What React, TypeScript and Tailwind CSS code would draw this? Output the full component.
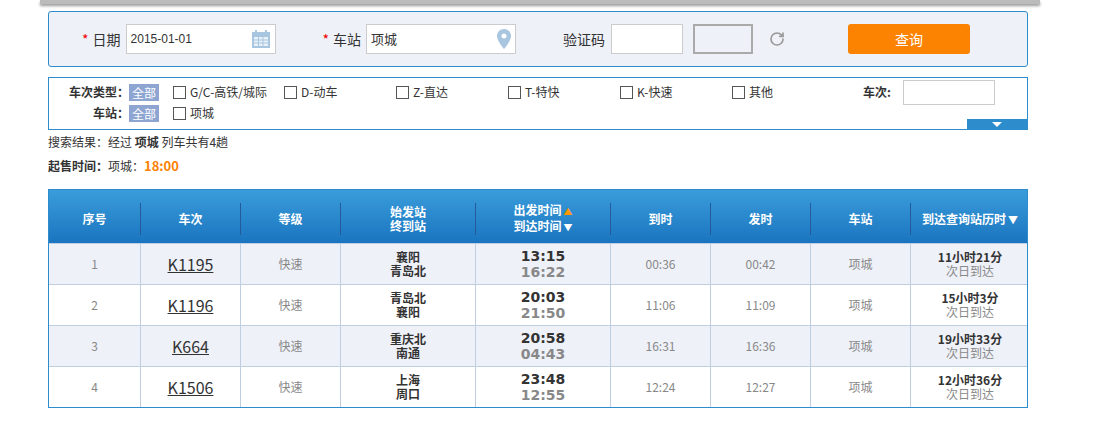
import { RotateCw } from 'lucide-react';

const rows = [
  { no: 1, code: 'K1195', from: '襄阳', to: '青岛北', dep: '13:15', arr: '16:22', a: '00:36', d: '00:42', dur: '11小时21分' },
  { no: 2, code: 'K1196', from: '青岛北', to: '襄阳', dep: '20:03', arr: '21:50', a: '11:06', d: '11:09', dur: '15小时3分' },
  { no: 3, code: 'K664', from: '重庆北', to: '南通', dep: '20:58', arr: '04:43', a: '16:31', d: '16:36', dur: '19小时33分' },
  { no: 4, code: 'K1506', from: '上海', to: '周口', dep: '23:48', arr: '12:55', a: '12:24', d: '12:27', dur: '12小时36分' },
];

const types = ['G/C-高铁/城际', 'D-动车', 'Z-直达', 'T-特快', 'K-快速', '其他'];
const cols = 'grid grid-cols-[91px_100px_100px_135px_135px_100px_100px_100px_119px]';

function Box() {
  return <span className="inline-block w-[13px] h-[13px] border border-[#555] bg-white mr-[4px]" />;
}

export default function App() {
  return (
    <div className="w-[1102px] h-[430px] bg-white text-[#333] relative" style={{ fontFamily: '"Microsoft YaHei","Noto Sans CJK SC",sans-serif' }}>
      <div className="absolute left-[40px] w-[1000px] top-0 h-[4px] bg-[#bbb] shadow-[0_2px_3px_rgba(0,0,0,0.4)]" />
      <div className="pl-[48px] pt-[11px] w-[1028px]">
        <div className="h-[56px] border border-[#2d8ccc] rounded-[3px] bg-[#eef1f8] flex items-center text-[14px]">
          <span className="text-[#e00] ml-[33px] mr-[4px]">*</span>
          <span>日期</span>
          <div className="ml-[5px] w-[150px] h-[30px] border border-[#ccc] bg-white flex items-center justify-between px-[4px] text-[12px]">
            <span style={{ fontFamily: '"Liberation Sans",sans-serif' }}>2015-01-01</span>
            <svg width="20" height="20" viewBox="0 0 20 20"><rect x="1" y="3" width="18" height="16" fill="#a9c6e0" /><rect x="3" y="8" width="14" height="9" fill="#e8f0f8" /><path d="M3 11h14M3 14h14M7.5 8v9M12 8v9" stroke="#a9c6e0" /><rect x="4" y="1" width="2" height="4" fill="#a9c6e0" /><rect x="14" y="1" width="2" height="4" fill="#a9c6e0" /></svg>
          </div>
          <span className="text-[#e00] ml-[47px] mr-[4px]">*</span>
          <span>车站</span>
          <div className="ml-[5px] w-[150px] h-[30px] border border-[#ccc] bg-white flex items-center justify-between px-[4px] text-[13px]">
            <span>项城</span>
            <svg width="14" height="20" viewBox="0 0 14 20"><path d="M7 0C3 0 0 3 0 7c0 5 7 13 7 13s7-8 7-13c0-4-3-7-7-7z" fill="#a9c6e0" /><circle cx="7" cy="7" r="2.5" fill="#fff" /></svg>
          </div>
          <span className="ml-[47px]">验证码</span>
          <div className="ml-[6px] w-[72px] h-[30px] border border-[#ccc] bg-white" />
          <div className="ml-[10px] w-[60px] h-[30px] border-2 border-[#aaa] bg-[#eef1f8]" />
          <RotateCw className="ml-[16px] text-[#999]" size={16} strokeWidth={2.5} />
          <button className="ml-[63px] w-[122px] h-[30px] bg-[#fc8302] rounded-[3px] text-white text-[14px]">查询</button>
        </div>

        <div className="mt-[10px] h-[53px] border border-[#2d8ccc] relative text-[12px]">
          <div className="flex items-center h-[24px] pt-[4px]">
            <span className="w-[80px] text-right font-bold">车次类型：</span>
            <span className="bg-[#8ea5d2] text-white px-[3px] h-[17px] leading-[17px] mr-[14px]">全部</span>
            {types.map((t, i) => (
              <span key={t} className={`flex items-center ${i === 0 ? 'w-[111px]' : 'w-[112px]'}`}><Box />{t}</span>
            ))}
            <span className="ml-[19px] font-bold">车次:</span>
            <div className="ml-[12px] w-[92px] h-[25px] border border-[#ccc] bg-white" />
          </div>
          <div className="flex items-center h-[21px] pt-[1px]">
            <span className="w-[80px] text-right font-bold">车站：</span>
            <span className="bg-[#8ea5d2] text-white px-[3px] h-[17px] leading-[17px] mr-[14px]">全部</span>
            <span className="flex items-center"><Box />项城</span>
          </div>
          <div className="absolute right-0 bottom-0 w-[60px] h-[10px] bg-[#2d8ccc] flex items-center justify-center">
            <span className="border-x-[5px] border-x-transparent border-t-[5px] border-t-white" />
          </div>
        </div>

        <div className="text-[12px] mt-[2px] h-[20px] leading-[20px]">搜索结果：经过 <b>项城</b> 列车共有4趟</div>
        <div className="text-[12px] mt-[4px] h-[20px] leading-[20px]"><b>起售时间：</b>项城：<b className="text-[#fc8302] text-[13px]">18:00</b></div>

        <div className="mt-[13px] border border-[#2d8ccc]">
          <div className={`${cols} h-[53px] bg-gradient-to-b from-[#3a9ddb] to-[#1a74bf] text-white text-[12px] font-bold`}>
            {['序号', '车次', '等级', 'A', 'B', '到时', '发时', '车站', 'C'].map((h, i) => (
              <div key={i} className={`flex items-center justify-center ${i > 0 ? 'border-l border-[#245b9a]' : ''} my-[13px] leading-[14px]`}>
                {h === 'A' ? <div className="text-center">始发站<br />终到站</div>
                  : h === 'B' ? <div className="flex flex-col items-center"><span>出发时间<span className="text-[#f90] text-[9px] ml-[2px]">▲</span></span><span>到达时间<span className="text-[9px] ml-[2px]">▼</span></span></div>
                  : h === 'C' ? <span>到达查询站历时<span className="text-[10px] ml-[2px]">▼</span></span>
                  : h}
              </div>
            ))}
          </div>
          {rows.map((r, i) => (
            <div key={r.no} className={`${cols} h-[41px] ${i % 2 === 0 ? 'bg-[#eef1f8]' : 'bg-white'} border-t border-[#c0cfe0] text-[12px] text-[#888]`}>
              <div className="flex items-center justify-center">{r.no}</div>
              <div className="flex items-center justify-center border-l border-[#c0cfe0] text-[16px] text-[#333] underline">{r.code}</div>
              <div className="flex items-center justify-center border-l border-[#c0cfe0]">快速</div>
              <div className="flex flex-col items-center justify-center border-l border-[#c0cfe0] text-[#333] font-bold leading-[14px]"><span>{r.from}</span><span>{r.to}</span></div>
              <div className="flex flex-col items-center justify-center border-l border-[#c0cfe0] font-bold text-[14px] leading-[16px]" style={{ fontFamily: '"DejaVu Sans",sans-serif' }}><span className="text-[#333]">{r.dep}</span><span className="text-[#888]">{r.arr}</span></div>
              <div className="flex items-center justify-center border-l border-[#c0cfe0]">{r.a}</div>
              <div className="flex items-center justify-center border-l border-[#c0cfe0]">{r.d}</div>
              <div className="flex items-center justify-center border-l border-[#c0cfe0]">项城</div>
              <div className="flex flex-col items-center justify-center border-l border-[#c0cfe0] leading-[14px]"><b className="text-[#333]">{r.dur}</b><span>次日到达</span></div>
            </div>
          ))}
        </div>
      </div>
    </div>
  );
}
